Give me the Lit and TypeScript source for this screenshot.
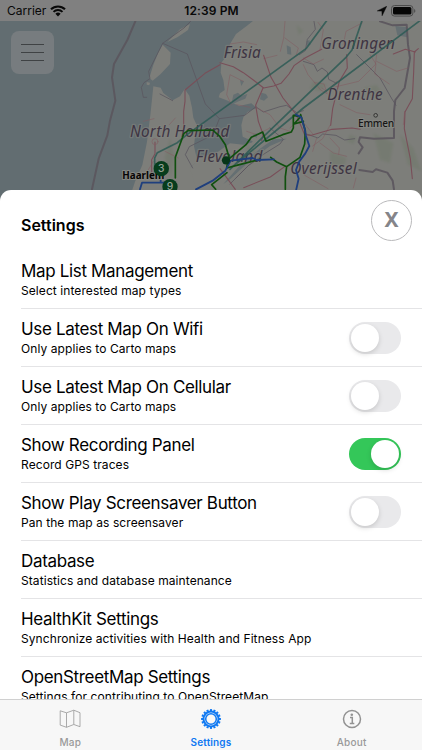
import { LitElement, html, svg, css, nothing } from "lit";
import { customElement, property } from "lit/decorators.js";
import { classMap } from "lit/directives/class-map.js";

interface Row {
  title: string;
  detail: string;
  on?: boolean;
}

const rows: Row[] = [
  { title: "Map List Management", detail: "Select interested map types" },
  { title: "Use Latest Map On Wifi", detail: "Only applies to Carto maps", on: false },
  { title: "Use Latest Map On Cellular", detail: "Only applies to Carto maps", on: false },
  { title: "Show Recording Panel", detail: "Record GPS traces", on: true },
  { title: "Show Play Screensaver Button", detail: "Pan the map as screensaver", on: false },
  { title: "Database", detail: "Statistics and database maintenance" },
  { title: "HealthKit Settings", detail: "Synchronize activities with Health and Fitness App" },
  { title: "OpenStreetMap Settings", detail: "Settings for contributing to OpenStreetMap" },
];

@customElement("status-bar")
export class StatusBar extends LitElement {
  static styles = css`
    :host {
      display: grid;
      grid-template-columns: 1fr auto 1fr;
      align-items: center;
      height: 21px;
      padding: 0 6px 0 7px;
      background: #808080;
      color: #080808;
      font: 500 12px/21px Inter, sans-serif;
    }
    .side { display: flex; align-items: center; gap: 4px; font-weight: 400; letter-spacing: 0; }
    .end { justify-content: flex-end; gap: 4px; }
    .time { font-weight: 600; letter-spacing: 0.1px; }
    svg { display: block; }
  `;
  render() {
    return html`
      <div class="side">
        <span>Carrier</span>
        <svg width="16" height="12" viewBox="0 0 16 12" fill="none" stroke="#080808">
          <path d="M1 4.3a10 10 0 0 1 14 0" stroke-width="2.1" />
          <path d="M3.5 6.9a6.4 6.4 0 0 1 9 0" stroke-width="2" />
          <path d="M8 11.4 5.4 8.8a3.7 3.7 0 0 1 5.2 0z" fill="#080808" stroke="none" />
        </svg>
      </div>
      <span class="time">12:39 PM</span>
      <div class="side end">
        <svg width="10" height="10" viewBox="0 0 10 10"><path d="M9.7.3.3 4.9l4.6.2.2 4.6z" fill="#080808" stroke="#080808" stroke-width=".5" stroke-linejoin="round" /></svg>
        <svg width="25" height="12" viewBox="0 0 25 12">
          <rect x=".5" y=".5" width="21.4" height="10.6" rx="3" fill="none" stroke="#4c4c4c" />
          <rect x="2" y="2" width="18.4" height="7.6" rx="1.5" fill="#060606" />
          <path d="M23.1 4q1.3.5 1.3 1.9T23.1 7.8z" fill="#4c4c4c" />
        </svg>
      </div>
    `;
  }
}

const roads = [
  "M195 372v35l-10 18v45M285 218v32l-4 30v62",
  "M390 134l40 12 30 18 30 22 31 24 30-6 22-8 24-28 16-26 32-22 50-26",
  "M521 112l22 66 36 62 40 50 25 60 20 2 62-18 60-4 24 4",
  "M519 210l-22 52 8 48 14 38-4 20",
  "M770 110l2 40-24 40-20 82-6 50",
  "M985 92l-12 10-2 60-4 80-22 40-2 50 10 50 8 40 6 60",
  "M910 108l36-14 30 8",
  "M585 445l-44 32-80 32M390 452l46 62",
];
const minorRoads = [
  "M420 78l40-6 40 8M585 10l-4 50-10 40M585 60l40 30-6 20M521 122l40-10",
  "M640 140l14 30 38 46 20 12-10-30-28-4M690 95l10-60-16-22",
  "M640 120l30 18 30-14M760 80l8-40 50-26M860 110l-4 30-50 50-76 18",
  "M750 260l50 24 40 6M720 322l-22 40-30 22M840 110l18 28-4 30 44 30",
  "M500 270l40 20 30 40 36 12M460 190l-40-20-10 60 14 30",
  "M600 330l30-30 40 50M680 360l-12 40M720 360l28 30-2 20",
  "M798 480l-8 30M640 450l4 22 70 40M690 375l40 30 40 10",
  "M160 310l32-8M190 430l-20 34M256 300l-18 20M225 400l40 20",
  "M740 190l-30 30-14-10M860 130l60 30 34-10M940 320l4-40",
  "M440 260l40 8M500 350l-30-10M540 330l-20 10",
];
const borders = [
  "M136 10l-24 56-40 72-6 40 10 70-16 60-8 44-26 70-20 92",
  "M870 10l38 12 42-2 4 60 6 40-16 90-28 36-4 34v80l-60 2-42-4-4 14 12 16-12 18",
  "M808 456l40 6 10-8 34 10 16 24 4 26",
];
const provinces = [
  "M302 10l-20 20-64 46-20 40-22 44 4 22-18 12-8 14 6 30h10",
  "M218 76l74 32 54 150 42 44 76-10 34-26",
  "M672 10l4 24-24 30-6 34-18 12M640 130l32 10 10 20 14-10 16 12 4 22 24 12",
  "M388 302l-14 36M370 350l-72 36-12 24 22 40M500 268l20 14 50-16 20-4 30 22 20-6",
  "M800 110l70 70 34 60 14 22M644 346l40 14 14-12 40 4 26 14 30-4",
  "M420 498l56-56 30-20M540 330l40 34-10 14-48 30-44 32-40 40M210 228l38 20",
];

function pin(x: number, y: number, label: string) {
  return svg`<circle class="pin" cx=${x} cy=${y} r="23" />
    <text class="pin-text" x=${x} y=${y + 11}>${label}</text>`;
}

@customElement("map-view")
export class MapView extends LitElement {
  static styles = css`
    :host { display: block; height: 100%; }
    .map { display: block; width: 100%; height: 100%; background: #626d71; }
    .land { fill: #7d7e7a; }
    .water { fill: #656f72; }
    .wood { fill: #6f7869; opacity: 0.5; filter: blur(3px); }
    .line { fill: none; stroke-linejoin: round; stroke-linecap: round; }
    .road { stroke: #794f59; stroke-width: 3.3; }
    .minor { stroke: #835b60; stroke-width: 2; opacity: 0.8; }
    .border { stroke: #5b555d; stroke-width: 6; opacity: 0.9; }
    .province { stroke: #5a5760; stroke-width: 3; opacity: 0.8; }
    .flight { stroke: #2d5a55; stroke-width: 5; opacity: 0.85; }
    .green { stroke: #10500f; stroke-width: 5; }
    .blue { stroke: #1f3f7d; stroke-width: 5.5; }
    .region {
      font: italic 46px "Noto Sans", sans-serif;
      fill: #3e3443;
      stroke: #83847f;
      stroke-width: 8;
      stroke-linejoin: round;
      stroke-opacity: 0.55;
      paint-order: stroke;
    }
    .town { font: 500 31px "Noto Sans", sans-serif; fill: #171717; stroke: #858681; stroke-width: 6; paint-order: stroke; }
    .bold { font-weight: 700; fill: #050505; }
    .pin { fill: #073c1c; }
    .pin-text { font: 500 31px Inter, sans-serif; fill: #94a197; text-anchor: middle; }
  `;
  render() {
    return html`
      <svg class="map" viewBox="0 21 422 181" preserveAspectRatio="xMidYMin slice">
        <g transform="translate(90 18) scale(.33333)">
          <path class="land" d="M500 0l-30 24-32 24-18 30-6 30-20 26-2 30 8 22 4 30-14 10-4 12 22 8 40 18 36-8 16 14-28 12-12 16-6 24 4 34 30 14-14 32-20 10-46 14-14 24 6 24-18 50-44 24H996V0z" />
          <path class="land" d="M190 205l22 4 8 16 28 22 22-12 14-22 14 20 8 36 4 30 12 26-8 40-2 20 10 44-20 18 8 20 36 14 6 40-40 30H115l20-60 22-50 14-70 10-80z" />
          <path class="land" d="M300 450l30-32 50-14 40-28 40 4 40-10 20-24 20 20-60 60-50 60-30 30h-80z" />
          <path class="land" d="M218 80l24 24-2 34-28 30-24 20-10-8 12-40 14-34zM300 18l-30 16-38 38 30-14 32-22zM170 192l10 2-2 8-8-2z" />
          <path class="water" d="M514 224l14 4 6 10-12 10-12-4zM430 230l14-6 10 10 18-6-6 14-20 8-22 10zM590 82l12 6 2 22-12-2zM450 186l12 4-8 14zM916 24l36 4v30l-30-6z" />
          <path class="water" d="M590 362l-50 22-60 44-60 56-20 14 50-56 60-50 40-28zM650 70l8-4 4 14-10 4zM500 360l-12-10 14-4z" />
          <path class="wood" d="M670 190l40 10-20 20-30-8zM850 345l60 30-10 60-30-10zM720 400l50 20-10 30-40-10zM930 350l40 40 24 70-40-20zM470 380l30 20-30 20zM240 360l14 60-10 60-20-60zM780 350l20 8-10 20-20-8zM620 20l20 20-14 10zM820 210l40-10 20 30-30 14z" />
          ${borders.map((d) => svg`<path class="line border" d=${d} />`)}
          ${provinces.map((d) => svg`<path class="line province" d=${d} />`)}
          ${minorRoads.map((d) => svg`<path class="line minor" d=${d} />`)}
          ${roads.map((d) => svg`<path class="line road" d=${d} />`)}
          <path class="line road" d="M285 216l60-50 45-26" />
          <circle cx="195" cy="371" r="9" class="line minor" />

          <text class="region" x="401" y="120" textLength="111">Frisia</text>
          <text class="region" x="694" y="93" textLength="221">Groningen</text>
          <text class="region" x="712" y="247" textLength="166">Drenthe</text>
          <text class="region" x="120" y="357" textLength="298">North Holland</text>
          <text class="region" x="317" y="432" textLength="200">Flevoland</text>
          <text class="region" x="601" y="468" textLength="199">Overijssel</text>
          <text class="town" x="804" y="328" textLength="109">Emmen</text>
          <circle cx="857" cy="292" r="5.5" fill="#83847f" stroke="#222" stroke-width="2.4" />

          <path class="line flight" d="M710 8l-62 84-360 260-26 22-60 30-8 16v44M816 8l-30 88-18 22-260 250-88 86M990 8L640 270 440 436" />
          <path class="line green" d="M256 480v-62l26-72 12-8 74-2 22 20 16 24 10 34-6 36 30-8 70-18M408 430l60-50 16-22 34-16 10 28 50-20 26-8 6-12v-38l22 4-20 22 28-8" />
          <path class="line green" d="M632 290l14 48-2 40-14 40-40 28-30-14-18-14M590 446l-4 30v38M365 500l12 14M365 500l46-36" />
          <path class="line blue" d="M318 514l50-26 38-30 16-30 66-8 12 6 52-2M618 290l16 8 10 34 4 22 10 30-12 22-18 24-10 26 8 26-8 36M150 514l6-20 84 0M212 460v34" />
          <circle cx="408" cy="427" r="12.5" fill="#073519" />
          <text class="town bold" x="97" y="482" textLength="126" lengthAdjust="spacingAndGlyphs">Haarlem</text>
          ${pin(214, 452, "3")} ${pin(240, 506, "9")}
        </g>
      </svg>
    `;
  }
}

@customElement("toggle-switch")
export class ToggleSwitch extends LitElement {
  @property({ type: Boolean }) on = false;
  static styles = css`
    :host { display: block; }
    .track {
      display: flex;
      box-sizing: border-box;
      width: 52px;
      height: 32px;
      padding: 2px;
      border-radius: 16px;
      background: #e9e9eb;
    }
    .on { justify-content: flex-end; background: #34c759; }
    .knob { width: 28px; height: 28px; border-radius: 50%; background: #fff; box-shadow: 0 2px 5px #00000026; }
  `;
  render() {
    return html`<div class=${classMap({ track: true, on: this.on })}><div class="knob"></div></div>`;
  }
}

@customElement("tab-bar")
export class TabBar extends LitElement {
  static styles = css`
    :host {
      display: grid;
      grid-template-columns: repeat(3, 1fr);
      box-sizing: border-box;
      height: 51px;
      border-top: 1px solid #d0d0d0;
      background: #f7f7f7;
    }
    .tab {
      display: flex;
      flex-direction: column;
      align-items: center;
      padding-top: 8px;
      color: #999;
      font: 500 10px/12px Inter, sans-serif;
      letter-spacing: 0.25px;
      gap: 6px;
    }
    .active { color: #1079f2; font-weight: 600; letter-spacing: 0.15px; }
    svg { display: block; overflow: visible; }
  `;
  render() {
    const teeth = Array.from({ length: 16 }, (_, i) => i * 22.5);
    return html`
      <div class="tab">
        <svg width="22" height="22" viewBox="-.5 0 22 22" fill="none" stroke="#a0a0a0" stroke-width=".9" stroke-linejoin="round">
          <path d="M.7 2.8 7 4.8l7.3-2.6 6.2 2.5v14l-6.2-2.2L7 19.3.7 17.1zM7 4.8v14.5M14.3 2.2v14.3" />
        </svg>
        <span>Map</span>
      </div>
      <div class="tab active">
        <svg width="22" height="22" viewBox="0 0 22 22" fill="none" stroke="#1079f2">
          ${teeth.map((a) => svg`<path d="M11 3V1.1" stroke-width="2.1" transform="rotate(${a} 11 11)" />`)}
          <circle cx="11" cy="11" r="7.5" stroke-width="2" />
          <circle cx="11" cy="11" r="5.3" stroke-width="1.5" />
        </svg>
        <span>Settings</span>
      </div>
      <div class="tab">
        <svg width="22" height="22" viewBox="0 0 22 22" fill="none" stroke="#929292">
          <circle cx="11" cy="11" r="8.5" stroke-width="1.5" />
          <circle cx="10.8" cy="6.8" r="1.3" fill="#929292" stroke="none" />
          <path d="M9 9.5h2.3v5.6M8.8 15.4h4.5" stroke-width="1.5" />
        </svg>
        <span>About</span>
      </div>
    `;
  }
}

@customElement("app-root")
export class AppRoot extends LitElement {
  static styles = css`
    :host {
      display: grid;
      grid-template-rows: 21px 169px 509px 51px;
      width: 422px;
      height: 750px;
      overflow: hidden;
      background: #fff;
      color: #000;
      font-family: Inter, "Liberation Sans", sans-serif;
    }
    .backdrop { position: relative; height: 181px; }
    .menu {
      position: absolute;
      top: 10px;
      left: 10.5px;
      display: flex;
      flex-direction: column;
      justify-content: center;
      align-items: center;
      gap: 7px;
      width: 43px;
      height: 43px;
      border-radius: 8px;
      background: #777c7f;
    }
    .bar { width: 23px; height: 1px; background: #3f4244; }
    .sheet {
      position: relative;
      display: flex;
      flex-direction: column;
      overflow: hidden;
      border-radius: 11px 11px 0 0;
      background: #fff;
    }
    .head { display: flex; flex: none; justify-content: space-between; align-items: center; height: 61px; padding: 0 10px 0 21px; }
    .heading { margin: 9px 0 0; font-size: 16px; font-weight: 600; letter-spacing: 0; }
    .close {
      box-sizing: border-box;
      width: 41px;
      height: 41px;
      padding: 0 0 3px;
      border: 1px solid #b9b9bb;
      border-radius: 50%;
      background: #fff;
      color: #858589;
      font: 700 21px/36px "Noto Sans", sans-serif;
      text-align: center;
    }
    .row {
      display: flex;
      flex: none;
      justify-content: space-between;
      align-items: center;
      box-sizing: border-box;
      height: 58px;
      margin-left: 21px;
      padding-right: 21px;
      border-bottom: 1px solid #e4e4e6;
    }
    .title { padding-top: 1px; font-size: 17px; line-height: 22px; letter-spacing: -0.34px; white-space: nowrap; }
    .detail { font-size: 12px; line-height: 18px; letter-spacing: 0.08px; white-space: nowrap; }
  `;
  render() {
    return html`
      <status-bar></status-bar>
      <div class="backdrop">
        <map-view></map-view>
        <div class="menu"><div class="bar"></div><div class="bar"></div><div class="bar"></div></div>
      </div>
      <section class="sheet">
        <header class="head">
          <h1 class="heading">Settings</h1>
          <button class="close">X</button>
        </header>
        ${rows.map(
          (r) => html`<div class="row">
            <div>
              <div class="title">${r.title}</div>
              <div class="detail">${r.detail}</div>
            </div>
            ${r.on === undefined ? nothing : html`<toggle-switch ?on=${r.on}></toggle-switch>`}
          </div>`
        )}
      </section>
      <tab-bar></tab-bar>
    `;
  }
}
